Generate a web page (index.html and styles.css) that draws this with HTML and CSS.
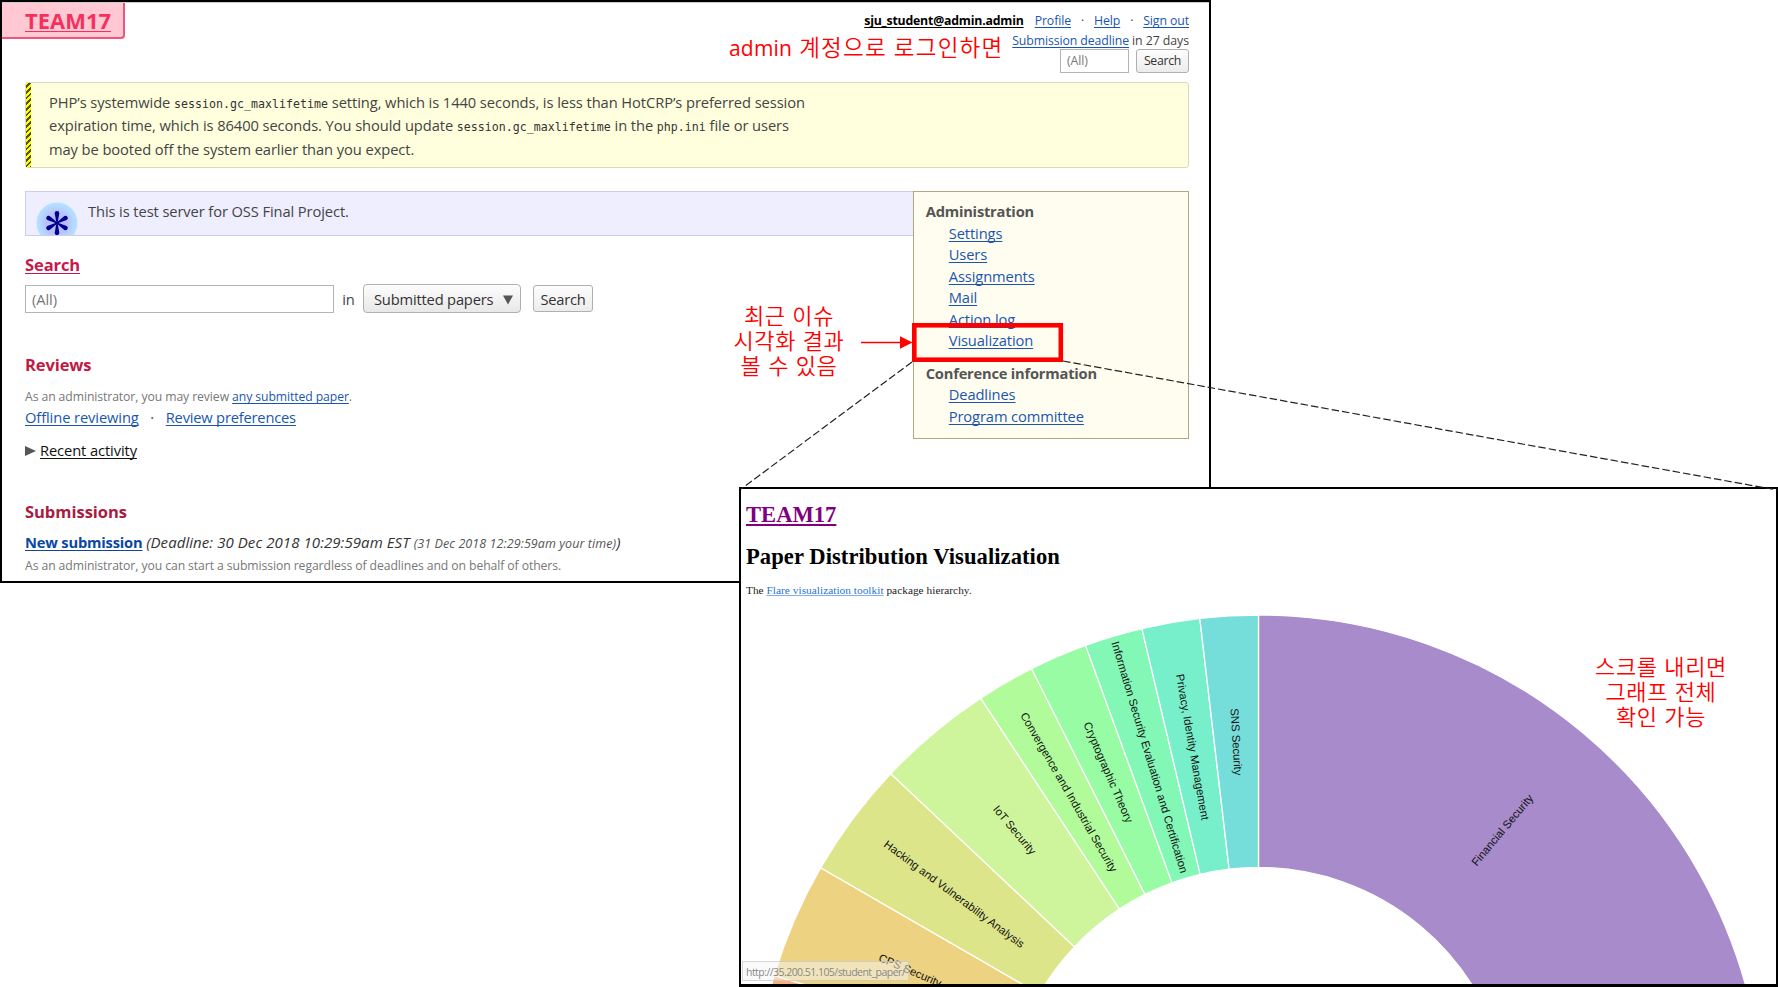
FILE: index.html
```html
<!DOCTYPE html>
<html lang="ko">
<head>
<meta charset="utf-8">
<title>TEAM17</title>
<link rel="stylesheet" href="styles.css">
</head>
<body>
<main class="board">
  <section class="window home">
    <header class="top">
      <h1 class="site"><a href="#">TEAM17</a></h1>
      <div class="account">
        <div class="row"><a class="me" href="#">sju_student@admin.admin</a><a href="#">Profile</a><i>·</i><a href="#">Help</a><i>·</i><a href="#">Sign out</a></div>
        <div class="row"><a href="#">Submission deadline</a><span class="days">in 27 days</span></div>
        <div class="row quick"><span class="field small-field">(All)</span><span class="button small-button">Search</span></div>
      </div>
    </header>
    <div class="warning">
      <p>PHP’s systemwide <code>session.gc_maxlifetime</code> setting, which is 1440 seconds, is less than HotCRP’s preferred session</p>
      <p>expiration time, which is 86400 seconds. You should update <code>session.gc_maxlifetime</code> in the <code>php.ini</code> file or users</p>
      <p>may be booted off the system earlier than you expect.</p>
    </div>
    <div class="columns">
      <div class="content">
        <div class="info">
          <svg class="star" viewBox="0 0 42 42" width="42" height="42">
            <defs><radialGradient id="glow"><stop offset="0" stop-color="#b9b4ff"/><stop offset=".5" stop-color="#b9c0ff"/><stop offset=".85" stop-color="#b3dcff"/><stop offset="1" stop-color="#b8e0ff"/></radialGradient></defs>
            <circle cx="21" cy="21" r="20.5" fill="url(#glow)"/>
            <g fill="#00008f"><path id="arm" d="M20.4 21 18.700 11.200a2.300 2.300 0 1 1 4.600 0L21.600 21z"/><use href="#arm" transform="rotate(60 21 21)"/><use href="#arm" transform="rotate(120 21 21)"/><use href="#arm" transform="rotate(180 21 21)"/><use href="#arm" transform="rotate(240 21 21)"/><use href="#arm" transform="rotate(300 21 21)"/></g>
          </svg>
          <span>This is test server for OSS Final Project.</span>
        </div>
        <h2 class="search-title"><a href="#">Search</a></h2>
        <div class="search-form">
          <span class="field big-field">(All)</span><span class="in">in</span>
          <span class="select">Submitted papers<svg width="10" height="10" viewBox="0 0 10 10"><path d="M0 .5h10L5 9.500z" fill="#555"/></svg></span>
          <span class="button big-button">Search</span>
        </div>
        <h2 class="reviews-title">Reviews</h2>
        <p class="hint">As an administrator, you may review <a href="#">any submitted paper</a>.</p>
        <p class="links"><a href="#">Offline reviewing</a><i>·</i><a class="preferences" href="#">Review preferences</a></p>
        <p class="recent"><svg width="11" height="10" viewBox="0 0 11 10"><path d="M0 0 11 5 0 10z" fill="#555"/></svg><a href="#">Recent activity</a></p>
        <h2 class="submissions-title">Submissions</h2>
        <p class="new"><a href="#">New submission</a> <em>(Deadline: 30 Dec 2018 10:29:59am EST <small>(31 Dec 2018 12:29:59am your time)</small>)</em></p>
        <p class="hint last">As an administrator, you can start a submission regardless of deadlines and on behalf of others.</p>
      </div>
      <aside class="side">
        <h3>Administration</h3>
        <ul>
          <li><a href="#">Settings</a></li>
          <li><a href="#">Users</a></li>
          <li><a href="#">Assignments</a></li>
          <li><a href="#">Mail</a></li>
          <li><a href="#">Action log</a></li>
          <li><a href="#">Visualization</a></li>
        </ul>
        <h3 class="second">Conference information</h3>
        <ul>
          <li><a href="#">Deadlines</a></li>
          <li><a href="#">Program committee</a></li>
        </ul>
      </aside>
    </div>
  </section>

  <section class="window chart">
    <h1><a href="#">TEAM17</a></h1>
    <h1 class="name">Paper Distribution Visualization</h1>
    <p>The <a href="#">Flare visualization toolkit</a> package hierarchy.</p>
    <svg id="sunburst" class="sunburst" viewBox="741 598 1035 386" width="1035" height="386"></svg>
    <div class="status">http://35.200.51.105/student_paper/</div>
    <div class="sliver"></div>
  </section>

  <svg class="overlay" width="1778" height="987" viewBox="0 0 1778 987">
    <path d="M912 362 741 489M1063 361 1777 490" fill="none" stroke="#222" stroke-width="1.2" stroke-dasharray="7.500 3"/>
    <rect x="914.300" y="325.300" width="146.500" height="34.400" fill="none" stroke="#f00" stroke-width="4.600"/>
    <path d="M861 342.500H901" stroke="#f00" stroke-width="1.300"/>
    <path d="M900 336.300 912.500 342.500 900 348.700z" fill="#f00"/>
  </svg>
  <p class="note login"><span class="latin">admin</span> 계정으로 로그인하면</p>
  <p class="note issue">최근 이슈<br>시각화 결과<br>볼 수 있음</p>
  <p class="note scroll">스크롤 내리면<br>그래프 전체<br>확인 가능</p>
</main>
<script src="chart.js"></script>
</body>
</html>
```

FILE: styles.css
```css
* { box-sizing: border-box; }
body { margin: 0; background: #fff; }
h1, h2, h3, p, ul { margin: 0; padding: 0; }
li { list-style: none; }
i { font-style: normal; }

.board { position: relative; width: 1778px; height: 987px; overflow: hidden; }
.window { position: absolute; background: #fff; border: 2px solid #000; overflow: hidden; }

.home {
  left: 0; top: 0; width: 1211px; height: 583px;
  font-family: "Open Sans", "Noto Sans", sans-serif;
  font-size: 14.700px; letter-spacing: -.1px; color: #444;
}
.home a { color: #1a56b0; text-decoration-thickness: 1px; text-underline-offset: 2px; text-decoration-skip-ink: none; }

.top { display: flex; justify-content: space-between; height: 80px; padding-right: 20px; border-top: 1px solid #ccc; }
.site { width: 123px; height: 36px; padding: 0 0 0 23px; font-size: 21.900px; letter-spacing: .05px; line-height: 35px; background: #ffc8d3; border: solid #f0557a; border-width: 0 2px 2px 0; border-radius: 0 0 4px 0; }
.home .site a { color: #f6305c; }
.account { padding-top: 8px; font-size: 12.300px; }
.row { display: flex; justify-content: flex-end; line-height: 19.500px; white-space: nowrap; }
.row i { width: 23px; text-align: center; }
.home .me { margin-right: 11px; font-weight: 700; letter-spacing: -.19px; color: #000; }
.days { margin-left: 3px; letter-spacing: -.05px; }
.quick { margin-top: -1px; gap: 7px; }
.field { border: 1px solid #b4b4b4; background: #fff; color: #777; }
.small-field { width: 69px; height: 24px; padding-left: 6px; line-height: 22px; }
.button { display: flex; align-items: center; justify-content: center; border: 1px solid #b0b0b0; border-radius: 3px; background: linear-gradient(#fdfdfd, #ececec); color: #333; }
.small-button { width: 53px; height: 24px; letter-spacing: -.3px; }

.warning {
  position: relative; width: 1164px; height: 86px; margin-left: 23px; padding: 8px 0 0 23px;
  background: #ffffdd; border: 1px solid #d9d9bd; border-radius: 3px; line-height: 23.400px; letter-spacing: -.08px; white-space: nowrap;
}
.warning p { height: 23.400px; }
.warning::before { content: ""; position: absolute; left: 0; top: 0; bottom: 0; width: 5px; background: repeating-linear-gradient(135deg, #ff0 0 2px, #55550a 2px 4px); }
code { font-family: "DejaVu Sans Mono", monospace; font-size: 11.600px; line-height: 1; letter-spacing: .02px; color: #333; }

.columns { display: flex; margin: 23px 20px 0 23px; }
.content { width: 889px; }
.info { display: flex; height: 45px; padding: 7px 0 0 10px; gap: 10px; line-height: 24px; background: #eef; border: 1px solid #ccccee; border-right: 0; overflow: hidden; }
.star { flex: none; margin-top: 3px; }
h2 { font-size: 16.500px; line-height: 24px; color: #c01a42; }
.search-title { margin-top: 17px; }
.home .search-title a { color: #c9184a; }
.search-form { display: flex; align-items: center; height: 29px; margin-top: 7px; }
.big-field { width: 309px; height: 28px; padding-left: 6px; line-height: 26px; }
.in { width: 29px; text-align: center; }
.select { display: flex; align-items: center; justify-content: space-between; width: 158px; height: 29px; padding: 0 7px 0 10px; border: 1px solid #b0b0b0; border-radius: 4px; background: linear-gradient(#fdfdfd, #e8e8e8); letter-spacing: -.18px; color: #333; }
.select svg { margin-top: 2px; }
.big-button { width: 60px; height: 27px; margin-left: 12px; letter-spacing: -.25px; }
.reviews-title { margin-top: 40px; }
.hint { margin-top: 10px; font-size: 12.200px; letter-spacing: -.08px; line-height: 20px; color: #777; }
.links { line-height: 21px; }
.links i { display: inline-block; width: 27px; text-align: center; }
.preferences { letter-spacing: -.2px; }
.recent { display: flex; align-items: center; gap: 4px; margin-top: 11px; line-height: 22px; }
.recent svg { margin-top: 2px; }
.home .recent a { color: #111; }
.submissions-title { margin-top: 39px; letter-spacing: -.03px; color: #a81c40; }
.new { margin-top: 7px; line-height: 22px; color: #333; white-space: nowrap; }
.new a { font-weight: 700; letter-spacing: -.18px; }
.home .new a { color: #0a47a5; }
.new em { font-size: 15px; letter-spacing: .065px; }
.new small { font-size: 12.500px; color: #555; letter-spacing: .08px; }
.last { margin-top: 1px; }

.side { width: 276px; height: 248px; padding: 9px 0 0 11.500px; background: #fffdf0; border: 1px solid #b3a782; line-height: 21.500px; letter-spacing: -.11px; }
.side h3 { font-size: 14.700px; letter-spacing: -.22px; color: #555; }
.side .second { margin-top: 11px; }
.side ul { padding-left: 23px; }

.chart { left: 739px; top: 487px; width: 1039px; height: 500px; padding: 13px 0 0 5px; border-bottom-width: 3px; font-family: "Liberation Serif", serif; color: #000; }
.chart h1 { font-size: 22.600px; line-height: 26px; }
.chart h1 a { color: #800080; text-decoration-thickness: 2px; text-underline-offset: 2px; }
.chart .name { margin-top: 16px; letter-spacing: .055px; }
.chart p { margin: 13px 0 1px; font-size: 11.300px; letter-spacing: .035px; line-height: 14px; color: #222; }
.chart p a { color: #2b74cf; text-decoration-color: #7fb0ea; text-decoration-skip-ink: none; }
.sunburst { display: block; margin-left: -5px; }
.sunburst path { stroke: #fff; stroke-width: 1.300px; }
.sunburst text { font-family: "Liberation Sans", sans-serif; font-size: 11.300px; text-anchor: middle; fill: #111; }
.status { position: absolute; left: 1px; bottom: 3px; width: 167px; height: 20px; padding-left: 3px; border: 1px solid rgba(190,190,190,.6); background: rgba(246,246,246,.5); font: 10.500px/20px "Open Sans", sans-serif; letter-spacing: -.54px; color: #888; white-space: nowrap; }
.sliver { position: absolute; left: 325px; bottom: -1px; width: 40px; height: 1px; background: #c76a2c; }

.overlay { position: absolute; left: 0; top: 0; }
.note { position: absolute; font-family: "Liberation Sans", "Noto Sans CJK KR", sans-serif; font-weight: 350; font-size: 22px; letter-spacing: .6px; line-height: 25px; color: #f00; text-align: center; white-space: nowrap; }
.login { left: 729px; top: 35px; font-family: "Open Sans", "Noto Sans CJK KR", sans-serif; font-size: 22.500px; letter-spacing: 1.2px; }
.latin { font-weight: 400; font-size: 21px; letter-spacing: .2px; }
.issue { left: 729px; top: 304px; width: 120px; }
.scroll { left: 1591px; top: 655px; width: 140px; }
```

FILE: chart.js
```js
// Topics in drawing order, clockwise from the top; start and size are in papers out of 54.
const TOTAL = 54, CX = 1258.5, CY = 1120.5, INNER = 253, OUTER = 505.5;
const topics = [
  { start: 0, size: 12, color: "#a78bcb", label: "Financial Security" },
  { start: 41, size: 2, color: "#f5b27e", label: "" },
  { start: 43, size: 2, color: "#edd281", label: "CPS Security" },
  { start: 45, size: 2, color: "#dde58a", label: "Hacking and Vulnerability Analysis" },
  { start: 47, size: 2, color: "#cff59c", label: "IoT Security" },
  { start: 49, size: 1, color: "#b2fb9a", label: "Convergence and Industrial Security" },
  { start: 50, size: 1, color: "#97fca3", label: "Cryptographic Theory" },
  { start: 51, size: 1, color: "#83f7b5", label: "Information Security Evaluation and Certification" },
  { start: 52, size: 1, color: "#77efcb", label: "Privacy, Identity Management" },
  { start: 53, size: 1, color: "#76deda", label: "SNS Security" }
];
const NS = "http://www.w3.org/2000/svg";
const svg = document.getElementById("sunburst");
const point = (r, a) => (CX + r * Math.sin(a)).toFixed(2) + " " + (CY - r * Math.cos(a)).toFixed(2);

for (const t of topics) {
  const a = t.start / TOTAL * 2 * Math.PI, b = (t.start + t.size) / TOTAL * 2 * Math.PI;
  const path = document.createElementNS(NS, "path");
  path.setAttribute("d", `M${point(OUTER, a)}A${OUTER} ${OUTER} 0 0 1 ${point(OUTER, b)}L${point(INNER, b)}A${INNER} ${INNER} 0 0 0 ${point(INNER, a)}Z`);
  path.setAttribute("fill", t.color);
  svg.appendChild(path);
}
for (const t of topics) {
  const deg = (t.start + t.size / 2) / TOTAL * 360;
  const text = document.createElementNS(NS, "text");
  text.setAttribute("transform", `translate(${CX} ${CY}) rotate(${deg - 90}) translate(${(INNER + OUTER) / 2} 0) rotate(${deg < 180 ? 0 : 180})`);
  text.setAttribute("dy", "0.35em");
  text.textContent = t.label;
  svg.appendChild(text);
}
```
